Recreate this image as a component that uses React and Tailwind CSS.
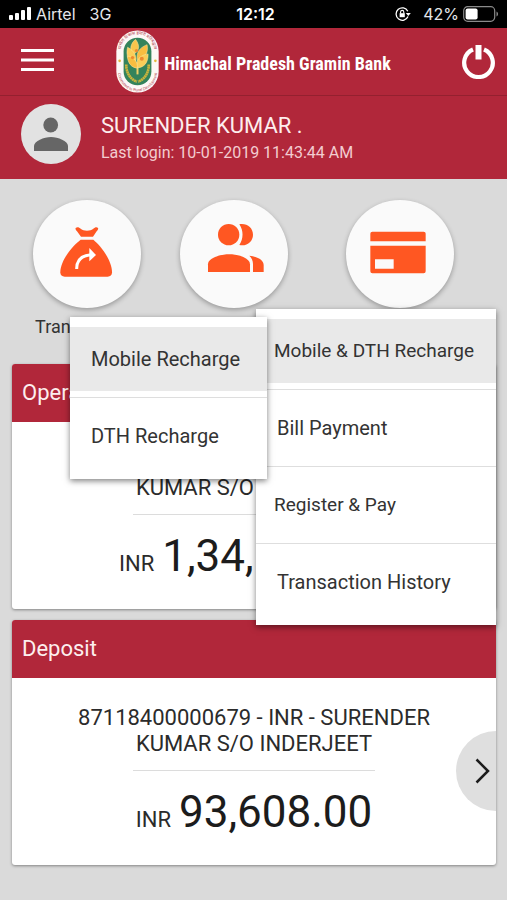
import React from "react";

const accounts = [
  {
    title: "Operative",
    name: "87118400000540 - INR - SURENDER KUMAR S/O INDERJEET",
    amount: "1,34,560.00",
    next: false,
  },
  {
    title: "Deposit",
    name: "87118400000679 - INR - SURENDER KUMAR S/O INDERJEET",
    amount: "93,608.00",
    next: true,
  },
];

function StatusBar() {
  return (
    <div className="grid h-7 grid-cols-3 items-center bg-black px-2 font-[Inter,sans-serif] text-base leading-7 text-white">
      <div className="flex items-center">
        <svg viewBox="0 0 23 14" className="h-[14px] w-[23px]" fill="currentColor">
          <rect x="1" y="8" width="4" height="5" rx="1" />
          <rect x="7" y="6" width="4" height="7" rx="1" />
          <rect x="13" y="3" width="4" height="10" rx="1" />
          <rect x="19" y="0" width="4" height="13" rx="1" />
        </svg>
        <span className="ml-[5px] text-gray-200">Airtel</span>
        <span className="ml-[14px] text-gray-200">3G</span>
      </div>
      <div className="pl-1 text-center font-semibold">12:12</div>
      <div className="flex items-center justify-end">
        <svg viewBox="0 0 16 14" className="h-[14px] w-4" fill="none" stroke="currentColor">
          <path d="M12.8 4.2A6.2 6.2 0 1 0 13 9.5" strokeWidth="1.3" />
          <path d="M10.8 6h5l-2.5 3z" fill="currentColor" stroke="none" />
          <rect x="4.6" y="6.2" width="5.2" height="4" fill="currentColor" stroke="none" />
          <path d="M5.6 6.5V5a1.6 1.6 0 0 1 3.2 0v1.5" strokeWidth="1.1" />
        </svg>
        <span className="ml-[12px] text-gray-200">42%</span>
        <svg viewBox="0 0 36 16" className="ml-[4px] h-4 w-9">
          <rect x="0.7" y="0.7" width="31" height="14.6" rx="4" fill="none" stroke="#8a8a8a" strokeWidth="1.2" />
          <rect x="2.6" y="2.6" width="12" height="10.8" rx="2" fill="#fff" />
          <path d="M33.5 5.5c2 .8 2 4.2 0 5z" fill="#8a8a8a" />
        </svg>
      </div>
    </div>
  );
}

function BankLogo() {
  return (
    <svg viewBox="0 0 130 190" className="h-[63px] w-[43px] shrink-0">
      <defs>
        <path id="ringTop" d="M14 82V64a51 51 0 0 1 102 0v18" />
        <path id="ringBottom" d="M6 112v14a59 59 0 0 0 118 0v-14" />
      </defs>
      <rect x="1" y="1" width="128" height="188" rx="64" fill="#fdf8f6" />
      <rect x="23" y="23" width="84" height="144" rx="42" fill="#34835b" />
      <text fill="#b4434f" fontSize="13" fontFamily="Noto Sans, sans-serif" textAnchor="middle">
        <textPath href="#ringTop" startOffset="50%">ग्रामीण विकास हमारी प्रतिबद्धता</textPath>
      </text>
      <text fill="#b4434f" fontSize="12" fontFamily="Liberation Sans, sans-serif" textAnchor="middle">
        <textPath href="#ringBottom" startOffset="50%">Committed to Rural Development</textPath>
      </text>
      <circle cx="11" cy="93" r="4" fill="#e5b93c" />
      <circle cx="119" cy="93" r="4" fill="#e5b93c" />
      <path d="M31 104c0 26 12 44 32 52M99 104c0 26-12 44-32 52" fill="none" stroke="#cdb43c" strokeWidth="8" strokeDasharray="6 1" />
      <path d="M65 98v36" stroke="#f0cf66" strokeWidth="6" />
      <g stroke="#fde9a8" strokeWidth="1.5">
        <path d="M59 28c-16 14-18 30-9 46 18-6 26-24 9-46z" fill="#f9c54c" />
        <path d="M35 52c-6 24 2 44 24 50 6-22-4-40-24-50z" fill="#fbcd58" />
        <path d="M94 44c-24 10-34 24-29 48 22-4 34-24 29-48z" fill="#f9bd40" />
        <path d="M97 72c-25 4-38 18-34 42 22 0 35-16 34-42z" fill="#fbcd58" />
        <path d="M34 78c2 23 13 36 31 37 1-20-11-33-31-37z" fill="#f9bd40" />
      </g>
      <circle cx="62" cy="62" r="5" fill="#ee8a2f" />
      <circle cx="50" cy="83" r="5" fill="#ee8a2f" />
      <circle cx="78" cy="87" r="6" fill="#ee8a2f" />
    </svg>
  );
}

function Header() {
  return (
    <header className="grid h-[68px] grid-cols-[42px_1fr_42px] items-center border-b border-[#94202f] bg-[#b1273a] px-3 text-white shadow-sm">
      <button type="button" aria-label="Menu" className="flex justify-end pb-1">
        <svg viewBox="0 0 33 24" className="h-6 w-[33px]" fill="currentColor">
          <path d="M0 1h33v3H0zM0 10.500h33v3H0zM0 20h33v3H0z" />
        </svg>
      </button>
      <div className="flex items-center justify-center gap-[5px]">
        <BankLogo />
        <h1 className="pt-1 font-['Liberation_Sans_Narrow','Roboto_Condensed',sans-serif] text-[18px] leading-6 font-bold whitespace-nowrap">
          Himachal Pradesh Gramin Bank
        </h1>
      </div>
      <button type="button" aria-label="Log out" className="flex justify-end">
        <svg viewBox="0 0 33 34" className="h-[34px] w-[33px]" fill="none" stroke="currentColor">
          <path d="M11 4.500A14.300 14.300 0 1 0 22 4.500" strokeWidth="4.200" />
          <path d="M16.500 0v14.500" strokeWidth="6" />
        </svg>
      </button>
    </header>
  );
}

function Profile() {
  return (
    <section className="flex h-[83px] items-center gap-5 bg-[#b1273a] px-[21px] pb-2">
      <svg viewBox="0 0 60 60" className="size-[60px] shrink-0">
        <circle cx="30" cy="30" r="30" fill="#e2e2e2" />
        <circle cx="29.700" cy="21" r="7.400" fill="#666" />
        <path d="M13 47v-5c0-5 10-9 17-9s17 4 17 9v5z" fill="#666" />
      </svg>
      <div className="pt-[10px] text-[#fdeeee]">
        <p className="text-[22px] leading-7">SURENDER KUMAR .</p>
        <p className="text-base leading-[26px] text-[#f3ccd0]">Last login: 10-01-2019 11:43:44 AM</p>
      </div>
    </section>
  );
}

function BagIcon() {
  return (
    <svg viewBox="0 0 324 324" className="size-full">
      <path d="M128 84c5-4 10-2 16 3 5 3 9 5 18 5s13-2 18-5c6-5 11-7 15-3 2 3-1 6-4 10l-11 16h-36l-12-16c-3-4-6-7-4-10z" fill="#ff5722" />
      <path d="M143 119h38c22 18 56 62 56 98 0 9-5 13-13 13H95c-8 0-13-4-13-13 0-36 37-80 61-98z" fill="#ff5722" />
      <path d="M131 207c0-26 14-41 43-43" fill="none" stroke="#fff" strokeWidth="9" />
      <path d="M169 144l20 21-20 19z" fill="#fff" />
    </svg>
  );
}

function PeopleIcon() {
  return (
    <svg viewBox="0 0 324 324" className="size-full" fill="#ff5722">
      <circle cx="146" cy="104" r="32" />
      <path d="M178 73c23-4 41 11 41 31s-18 36-41 31c13-19 13-43 0-62z" />
      <path d="M84 216v-23c0-18 35-30 64-30s62 12 62 30v23z" />
      <path d="M208 167c24 3 43 13 43 28v21h-32v-24c0-10-4-18-11-25z" />
    </svg>
  );
}

function CardIcon() {
  return (
    <svg viewBox="0 0 324 324" className="size-full" fill="#ff5722">
      <path d="M73 124v-23q0-6 6-6h154q6 0 6 6v23z" />
      <path fillRule="evenodd" d="M73 137h166v77q0 6-6 6H79q-6 0-6-6zM87 178v28h56v-28z" />
    </svg>
  );
}

function Shortcut({ label, showLabel, children }) {
  return (
    <button type="button" aria-label={label} className="flex flex-col items-center">
      <span className="block size-[108px] rounded-full bg-[#fafafa] shadow-[0_2px_5px_rgba(0,0,0,0.3)]">
        {children}
      </span>
      {showLabel && <span className="mt-[7px] text-[18px] leading-6 text-[#333]">{label}</span>}
    </button>
  );
}

function AccountCard({ account }) {
  return (
    <article className="relative overflow-hidden rounded-[3px] bg-white shadow-[0_1px_3px_rgba(0,0,0,0.4)]">
      <h2 className="bg-[#b1273a] px-[10px] text-[22px] leading-[58px] text-[#fdeeee]">{account.title}</h2>
      <div className="flex flex-col items-center pt-[27px] pb-[27px] text-[#2b2b2b]">
        <p className="w-3/4 text-center text-[22px] leading-[26px]">{account.name}</p>
        <hr className="mt-[13px] w-1/2 border-[#dcdcdc]" />
        <p className="mt-[15px] flex items-baseline gap-2 text-[22px]">
          INR <span className="text-[44px] leading-[52px] text-[#1c1c1c]">{account.amount}</span>
        </p>
      </div>
      {account.next && (
        <button
          type="button"
          aria-label="Next account"
          className="absolute top-[111px] right-0 flex h-20 w-10 items-center justify-end rounded-l-full bg-[#dfdfdf] pr-[6px]"
        >
          <svg viewBox="0 0 15 26" className="h-[26px] w-[15px]" fill="none" stroke="#1c1c1c" strokeWidth="2.500">
            <path d="M1.500 1.500L13 13 1.500 24.500" />
          </svg>
        </button>
      )}
    </article>
  );
}

function ActiveItem({ children, className }) {
  return (
    <li className="border-b border-[#dedede] pt-[10px] pb-[6px]">
      <button type="button" className={`block h-16 w-full bg-[#e9e9e9] text-left ${className}`}>
        {children}
      </button>
    </li>
  );
}

export default function App() {
  return (
    <div className="min-h-screen bg-[#dadada] font-[Roboto,sans-serif]">
      <StatusBar />
      <Header />
      <Profile />

      <main className="relative pt-[21px] pb-9">
        <nav className="grid grid-cols-[174fr_119fr_214fr] items-start">
          <Shortcut label="Transactions" showLabel>
            <BagIcon />
          </Shortcut>
          <Shortcut label="Beneficiary">
            <PeopleIcon />
          </Shortcut>
          <Shortcut label="Recharge and bills">
            <CardIcon />
          </Shortcut>
        </nav>

        <div className="mt-[25px] flex flex-col gap-[11px] pr-[11px] pl-3">
          {accounts.map((account) => (
            <AccountCard key={account.title} account={account} />
          ))}
        </div>

        {/* recharge menu and its submenu */}
        <ul className="absolute top-[130px] right-[11px] w-[240px] bg-white pb-[5px] text-[20px] text-[#333] shadow-[0_2px_6px_rgba(0,0,0,0.5)]">
          <ActiveItem className="pl-[18px] text-[19px]">Mobile &amp; DTH Recharge</ActiveItem>
          <li className="border-b border-[#dedede]">
            <button type="button" className="block h-[76px] w-full pl-[21px] text-left">Bill Payment</button>
          </li>
          <li className="border-b border-[#dedede]">
            <button type="button" className="block h-[76px] w-full pl-[18px] text-left text-[19px]">Register &amp; Pay</button>
          </li>
          <li>
            <button type="button" className="block h-[76px] w-full pl-[21px] text-left">Transaction History</button>
          </li>
        </ul>
        <ul className="absolute top-[138px] right-[240px] w-[197px] bg-white pb-[5px] text-[20px] text-[#333] shadow-[0_2px_6px_rgba(0,0,0,0.5)]">
          <ActiveItem className="pl-[21px]">Mobile Recharge</ActiveItem>
          <li>
            <button type="button" className="block h-[76px] w-full pl-[21px] text-left">DTH Recharge</button>
          </li>
        </ul>
      </main>
    </div>
  );
}
